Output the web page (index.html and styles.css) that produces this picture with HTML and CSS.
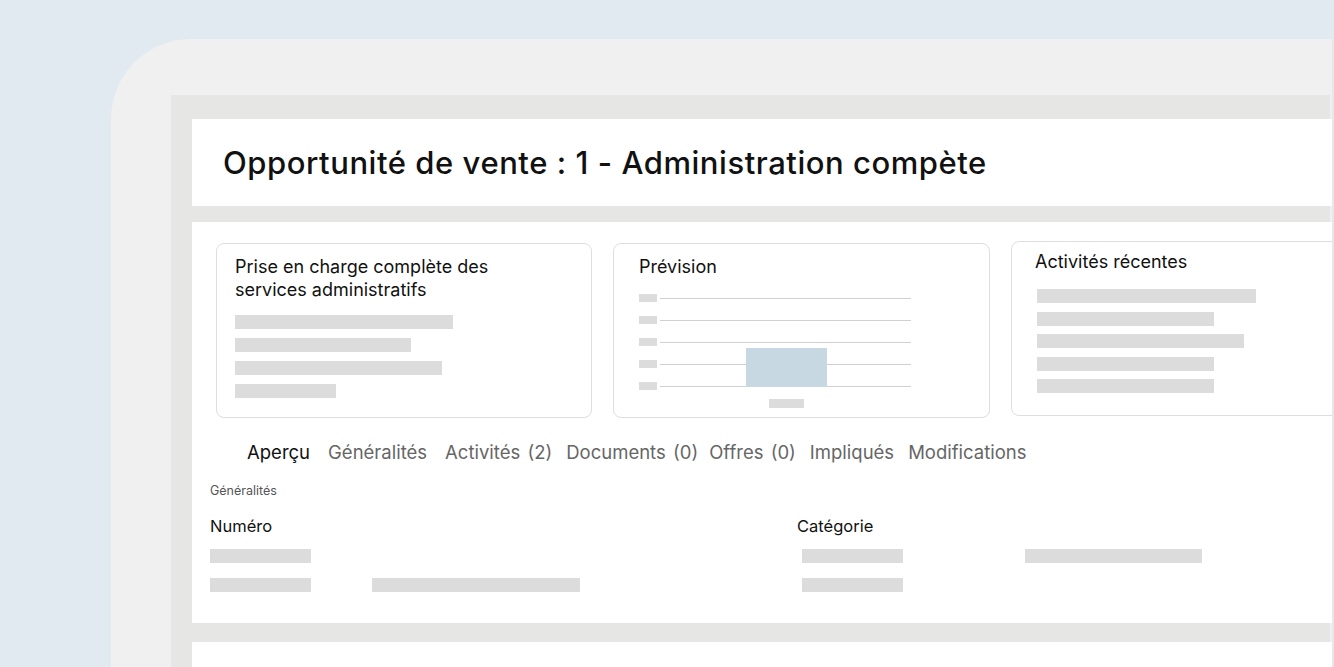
FILE: index.html
```html
<!DOCTYPE html>
<html lang="fr">
<head>
  <meta charset="UTF-8" />
  <meta name="viewport" content="width=device-width, initial-scale=1.0"/>
  <title>Opportunité de vente</title>
  <link rel="stylesheet" href="styles.css">
</head>
<body>

  <!-- Cadre de l'appareil -->
  <div class="device">
    <div class="screen">

      <header class="title-bar">
        <h1>Opportunité de vente : 1 - Administration compète</h1>
      </header>

      <section class="panel">
        <div class="cards">
          <div class="card card-summary">
            <h2>Prise en charge complète des services administratifs</h2>
            <div class="bars">
              <span class="bar" style="width: 218px"></span>
              <span class="bar" style="width: 176px"></span>
              <span class="bar" style="width: 207px"></span>
              <span class="bar" style="width: 101px"></span>
            </div>
          </div>

          <div class="card card-forecast">
            <h2>Prévision</h2>
            <div class="chart">
              <div class="chart-row"><span class="tick"></span><span class="grid-line"></span></div>
              <div class="chart-row"><span class="tick"></span><span class="grid-line"></span></div>
              <div class="chart-row"><span class="tick"></span><span class="grid-line"></span></div>
              <div class="chart-row"><span class="tick"></span><span class="grid-line"></span></div>
              <div class="chart-row"><span class="tick"></span><span class="grid-line"></span></div>
              <span class="chart-bar"></span>
              <span class="chart-label"></span>
            </div>
          </div>

          <div class="card card-activity">
            <h2>Activités récentes</h2>
            <div class="bars bars-tight">
              <span class="bar" style="width: 219px"></span>
              <span class="bar" style="width: 177px"></span>
              <span class="bar" style="width: 207px"></span>
              <span class="bar" style="width: 177px"></span>
              <span class="bar" style="width: 177px"></span>
            </div>
          </div>
        </div>

        <nav class="tabs">
          <span class="tab active">Aperçu</span>
          <span class="tab">Généralités</span>
          <span class="tab">Activités <span class="count">(2)</span></span>
          <span class="tab">Documents <span class="count">(0)</span></span>
          <span class="tab">Offres <span class="count">(0)</span></span>
          <span class="tab">Impliqués</span>
          <span class="tab">Modifications</span>
        </nav>

        <div class="section-label">Généralités</div>

        <div class="fields">
          <div class="field">
            <div class="field-name">Numéro</div>
            <div class="field-row"><span class="bar" style="width: 101px"></span></div>
            <div class="field-row">
              <span class="bar" style="width: 101px"></span>
              <span class="bar bar-far" style="width: 208px"></span>
            </div>
          </div>
          <div class="field field-right">
            <div class="field-name">Catégorie</div>
            <div class="field-row indent">
              <span class="bar" style="width: 101px"></span>
              <span class="bar bar-wide" style="width: 177px"></span>
            </div>
            <div class="field-row indent"><span class="bar" style="width: 101px"></span></div>
          </div>
        </div>
      </section>

      <section class="panel panel-next"></section>

    </div>
  </div>

</body>
</html>
```

FILE: styles.css
```css
html, body {
  margin: 0;
  padding: 0;
  height: 667px;
  overflow: hidden;
  background-color: #e2eaf1;
  font-family: Inter, "Liberation Sans", Arial, sans-serif;
  color: #111;
}

.device {
  margin: 39px 0 0 111px;
  height: 626px;
  background: #f0f0f0;
  border-top-left-radius: 80px;
  padding: 56px 0 0 60px;
  border-right: 2px solid #e8e8e8;
  overflow: hidden;
}

.screen {
  height: 100%;
  background: #e6e6e4;
  padding: 24px 0 0 21px;
  margin-right: 2px;
}

.title-bar {
  background: white;
  height: 87px;
  display: flex;
  align-items: center;
  padding-left: 31px;
  margin-right: -4px;
}

.title-bar h1 {
  margin: 0;
  font-size: 31px;
  font-weight: 500;
  letter-spacing: 0.55px;
}

.panel {
  background: white;
  margin-top: 16px;
  margin-right: -4px;
  height: 401px;
  box-sizing: border-box;
  padding: 21px 0 0 24px;
}

.panel-next {
  margin-top: 19px;
  height: 100px;
}

/* Cartes du haut */
.cards {
  display: flex;
  gap: 21px;
}

.card {
  width: 376px;
  height: 175px;
  box-sizing: border-box;
  border: 1px solid #dedede;
  border-radius: 8px;
  padding: 11px 18px 0 18px;
  flex-shrink: 0;
}

.card h2 {
  margin: 0;
  font-size: 18px;
  font-weight: 400;
  line-height: 23px;
  color: #111;
}

.card-summary h2 {
  max-width: 275px;
}

.card-forecast {
  width: 377px;
  padding-left: 25px;
}

.card-activity {
  margin-top: -2px;
  padding: 8px 0 0 23px;
  width: 340px;
}

.bars {
  display: flex;
  flex-direction: column;
  gap: 9px;
  margin-top: 14px;
}

.bars-tight {
  gap: 8.5px;
  margin: 16px 0 0 2px;
}

.bar {
  display: block;
  height: 14px;
  background: #dddcdc;
}

/* Graphique de prévision */
.chart {
  position: relative;
  margin-top: 9px;
  width: 272px;
}

.chart-row {
  display: flex;
  align-items: center;
  gap: 3px;
  height: 22px;
}

.tick {
  width: 18px;
  height: 8px;
  background: #dddcdc;
}

.grid-line {
  flex: 1;
  height: 1px;
  background: #d0d0d0;
}

.chart-bar {
  position: absolute;
  left: 107px;
  top: 61px;
  width: 81px;
  height: 39px;
  background: #c8d8e2;
}

.chart-label {
  position: absolute;
  left: 130px;
  top: 112px;
  width: 35px;
  height: 9px;
  background: #dddcdc;
}

/* Onglets */
.tabs {
  display: flex;
  gap: 14px;
  margin: 22px 0 0 31px;
  font-size: 18.5px;
  line-height: 24px;
  color: #666;
}

.tab .count {
  margin-left: 2px;
}

.tab.active {
  color: #111;
  margin-right: 4px;
}

.tab:nth-child(2) {
  margin-right: 4px;
}

.tab:nth-child(5) {
  margin-left: -3px;
}

.section-label {
  margin: 19px 0 0 -6px;
  font-size: 12.5px;
  color: #555;
}

.fields {
  display: flex;
  margin: 18px 0 0 -6px;
}

.field {
  width: 587px;
  flex-shrink: 0;
}

.field-name {
  font-size: 16.5px;
  line-height: 20px;
}

.field-row {
  display: flex;
  margin-top: 13px;
}

.field-row + .field-row {
  margin-top: 15px;
}

.bar-far {
  margin-left: 61px;
}

.bar-wide {
  margin-left: 122px;
}

.indent {
  padding-left: 5px;
}
```
